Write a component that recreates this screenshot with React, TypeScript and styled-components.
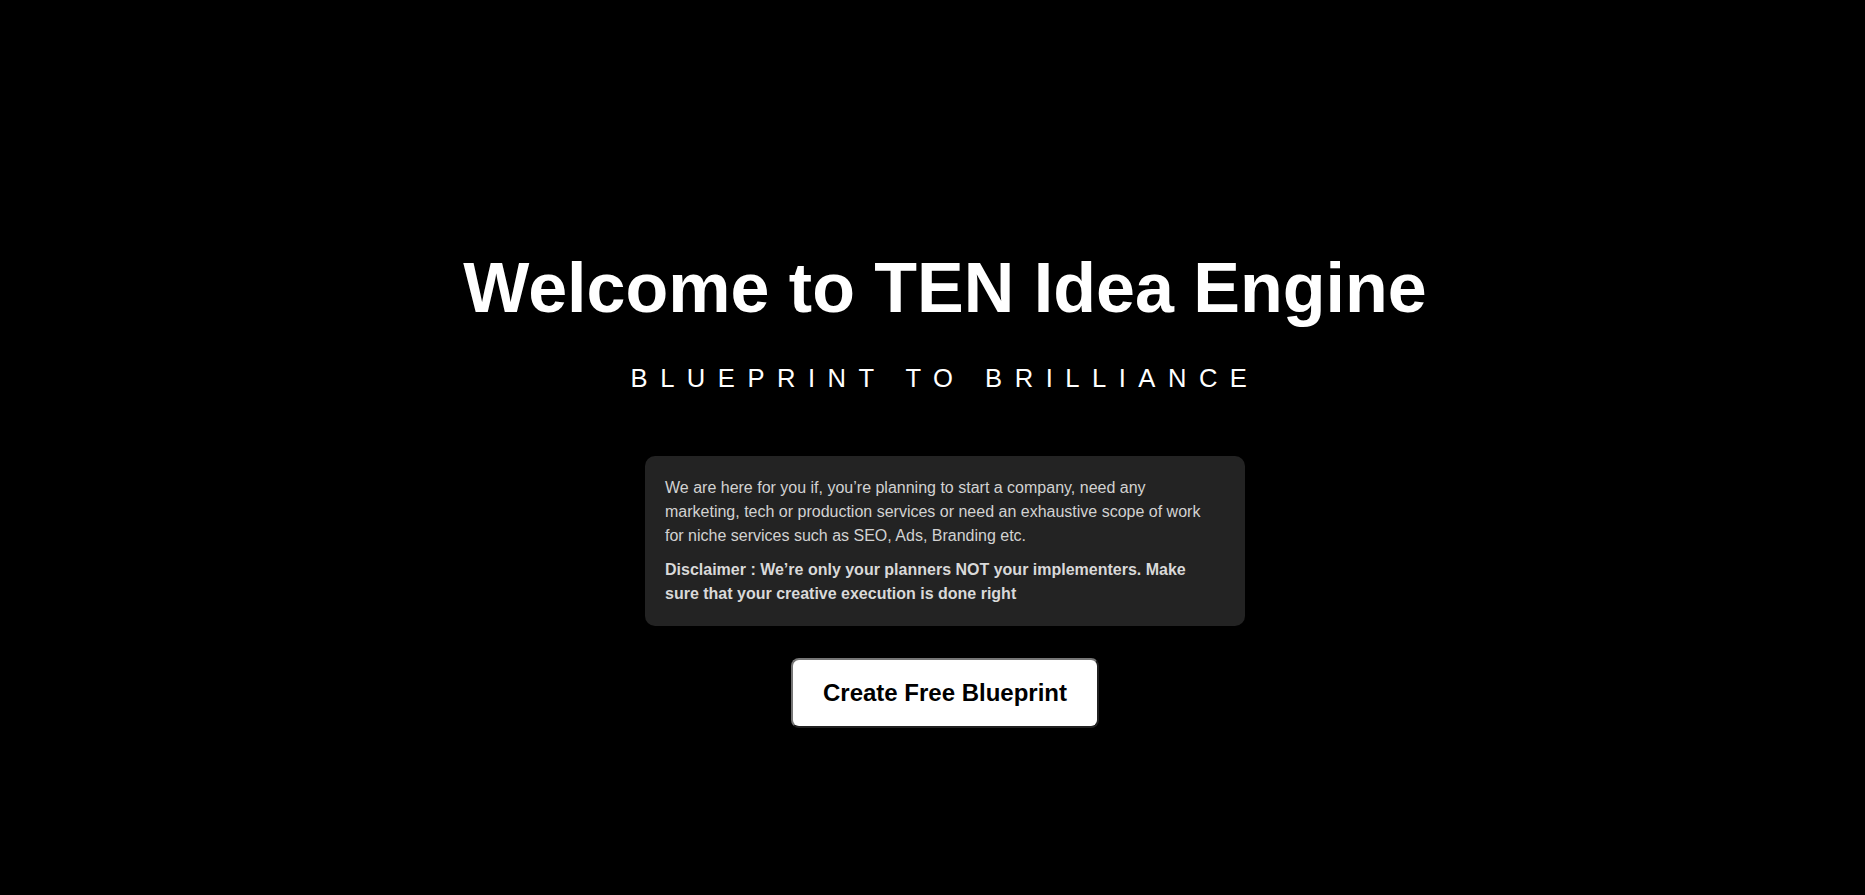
import React from "react";
import styled, { createGlobalStyle } from "styled-components";

const GlobalStyle = createGlobalStyle`
  html, body {
    margin: 0;
    padding: 0;
    background: #000;
  }
  body {
    font-family: "Liberation Sans", Arial, Helvetica, sans-serif;
    color: #fff;
  }
  * { box-sizing: border-box; }
`;

const Page = styled.main`
  min-height: 895px;
  background: #000;
  display: flex;
  flex-direction: column;
  align-items: center;
  padding: 248px 0 0 25px;
`;

const Title = styled.h1`
  margin: 0;
  font-size: 70px;
  font-weight: 700;
  line-height: normal;
  color: #fff;
  text-align: center;
`;

const Tagline = styled.p`
  margin: 36px 0 0;
  font-size: 25.6px;
  font-weight: 400;
  line-height: normal;
  letter-spacing: 12.5px;
  color: #fff;
  text-align: center;
`;

const InfoCard = styled.section`
  margin-top: 63px;
  width: 600px;
  background: #232323;
  border-radius: 10px;
  padding: 20px 32px 20px 20px;
  display: flex;
  flex-direction: column;
  gap: 10px;
`;

const InfoText = styled.p<{ $strong?: boolean }>`
  margin: 0;
  font-size: 16px;
  line-height: 24px;
  color: ${(p) => (p.$strong ? "#d9d9d9" : "#d2d2d2")};
  font-weight: ${(p) => (p.$strong ? 700 : 400)};
`;

const CtaButton = styled.button`
  margin-top: 32px;
  font-family: "Liberation Sans", Arial, Helvetica, sans-serif;
  font-size: 24px;
  font-weight: 700;
  line-height: normal;
  color: #000;
  background: #fff;
  border: 2px outset #767676;
  border-radius: 8px;
  padding: 19px 30px;
  cursor: pointer;
`;

export default function App() {
  return (
    <>
      <GlobalStyle />
      <Page>
        <Title>Welcome to TEN Idea Engine</Title>
        <Tagline>BLUEPRINT TO BRILLIANCE</Tagline>
        <InfoCard>
          <InfoText>
            We are here for you if, you’re planning to start a company, need any
            marketing, tech or production services or need an exhaustive scope of
            work for niche services such as SEO, Ads, Branding etc.
          </InfoText>
          <InfoText $strong>
            Disclaimer : We’re only your planners NOT your implementers. Make sure
            that your creative execution is done right
          </InfoText>
        </InfoCard>
        <CtaButton>Create Free Blueprint</CtaButton>
      </Page>
    </>
  );
}
